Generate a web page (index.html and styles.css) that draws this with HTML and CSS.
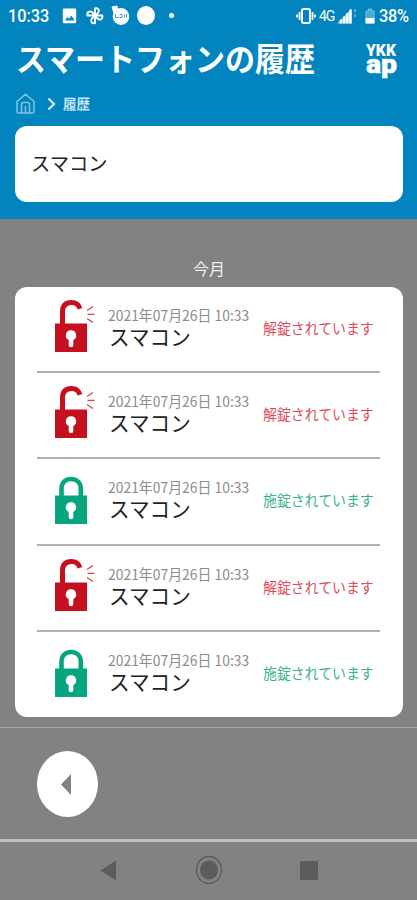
FILE: index.html
```html
<!DOCTYPE html>
<html lang="ja">
<head>
<meta charset="UTF-8">
<title>スマートフォンの履歴</title>
<link rel="stylesheet" href="styles.css">
</head>
<body>
	<svg class="symbols" width="0" height="0">
		<symbol id="unlocked" viewBox="0 0 42 54">
			<path d="M7.500 25V12C7.500 4.500 12 2.600 16.500 2.600C20.500 2.600 23.500 4 25 8.800" fill="none" stroke="#c4101f" stroke-width="5"/>
			<path d="M0 23.500H32V52H0Z" fill="#c4101f"/>
			<path d="M16 30.200a5 5.200 0 0 0-2.300 9.900V45a2.300 2.300 0 0 0 4.600 0V40.100A5 5.200 0 0 0 16 30.200Z" fill="#fff"/>
			<path d="M32 10.500L38 6.500M32.500 14.400H39.500M32 18.500L38 22.500" fill="none" stroke="#d04450" stroke-width="1.400"/>
		</symbol>
		<symbol id="locked" viewBox="0 0 42 54">
			<path d="M6.500 25V17C6.500 10 11 7 16 7S25.800 10 25.800 17V25" fill="none" stroke="#05a67f" stroke-width="4.600"/>
			<path d="M0 23.500H32V52H0Z" fill="#05a67f"/>
			<path d="M16 30.200a5 5.200 0 0 0-2.300 9.900V45a2.300 2.300 0 0 0 4.600 0V40.100A5 5.200 0 0 0 16 30.200Z" fill="#fff"/>
		</symbol>
	</svg>

	<header class="header">
		<div class="statusBar">
			<span class="clock">10:33</span>
			<svg class="notices" width="115" height="24" viewBox="62 4 115 24">
				<path fill="#fff" fill-rule="evenodd" d="M64 8.500H75a1.200 1.200 0 0 1 1.200 1.200V22a1.200 1.200 0 0 1-1.200 1.200H64a1.200 1.200 0 0 1-1.200-1.200V9.700a1.200 1.200 0 0 1 1.200-1.200ZM65 20.500H74.500L71.500 15.500L69 18.700L67.300 17Z"/>
				<g fill="none" stroke="#fff" stroke-width="1.900">
					<path d="M95 15.500V8.500C98.500 7.500 100 10.500 98 13L95 15.500"/>
					<path d="M95 15.500H102.300C103.300 19 100 20.500 97.500 18.500L95 15.500"/>
					<path d="M95 15.500V23C91.500 24 90 21 92 18.500L95 15.500"/>
					<path d="M95 15.500H87.500C86.500 12 90 10.500 92.500 12.500L95 15.500"/>
				</g>
				<ellipse cx="121" cy="16.500" rx="8.300" ry="8.500" fill="#fff"/>
				<path d="M112 7L117 6L118 11L114 13Z" fill="#fff" stroke="#fff"/>
				<path d="M115.500 14V17.500H118.500M119.500 14.500H122V17.500H119.500M124.500 14.500V17.500M126.500 14V17.500" fill="none" stroke="#3c9bc9"/>
				<ellipse cx="146" cy="15.500" rx="9" ry="9.600" fill="#fff"/>
				<circle cx="171.500" cy="15.500" r="2.500" fill="#fff"/>
			</svg>
			<div class="phoneState">
				<svg width="20" height="18" viewBox="0 0 20 18">
					<rect x="6" y="2" width="8" height="14" rx="1.500" fill="none" stroke="#fff" stroke-width="2"/>
					<path d="M3.500 5V13M16.500 5V13M1 7.500V10.500M19 7.500V10.500" stroke="#fff" stroke-width="1.800"/>
				</svg>
				<span class="network">4G</span>
				<svg width="20" height="18" viewBox="0 0 20 18">
					<path d="M0 16.500L14.500 1.500V16.500Z" fill="#9bd0e8"/>
					<path d="M4 16.500V12.500M7.200 16.500V9.500M10.400 16.500V6M13.500 16.500V2.500" stroke="#fff" stroke-width="2.300"/>
					<path d="M18 2V5M18 7V10" stroke="#6bb9dc" stroke-width="1.500"/>
				</svg>
				<svg class="battery" width="10" height="18" viewBox="0 0 10 18">
					<path d="M1 4H3.500V2H6.500V4H9V16H1Z" fill="#4aa9d3" stroke="#7cc2e0"/>
					<path d="M.5 11H9.500V16.500H.5Z" fill="#fff"/>
				</svg>
				<span class="percent">38%</span>
			</div>
		</div>
		<div class="titleRow">
			<h1>スマートフォンの履歴</h1>
			<svg class="logo" width="32" height="34" viewBox="0 0 32 34">
				<text class="logoTop" x="0" y="13" textLength="30" lengthAdjust="spacingAndGlyphs">YKK</text>
				<text class="logoBottom" x="0" y="30" textLength="31" lengthAdjust="spacingAndGlyphs">ap</text>
			</svg>
		</div>
		<nav class="breadcrumb">
			<svg width="19" height="22" viewBox="0 0 19 22">
				<path d="M1 8.500L9.500 1.300L18 8.500V18.500Q18 20 16.500 20H2.500Q1 20 1 18.500ZM5.500 20V11.500Q5.500 9.500 7.500 9.500H11.500Q13.500 9.500 13.500 11.500V20M9.500 13V20" fill="none" stroke="#7ec5e5" stroke-width="1.500"/>
			</svg>
			<svg class="chevron" width="9" height="14" viewBox="0 0 9 14">
				<path d="M1.500 1.500L7 7L1.500 12.500" fill="none" stroke="#d5edf8" stroke-width="2.200"/>
			</svg>
			<span>履歴</span>
		</nav>
		<div class="device"><span>スマコン</span></div>
	</header>

	<main class="history">
		<h2>今月</h2>
		<ul class="historyList">
			<li>
				<svg class="lock" width="42" height="54"><use href="#unlocked"/></svg>
				<div class="entry"><time>2021年07月26日 10:33</time><span class="name">スマコン</span></div>
				<span class="state open">解錠されています</span>
			</li>
			<li>
				<svg class="lock" width="42" height="54"><use href="#unlocked"/></svg>
				<div class="entry"><time>2021年07月26日 10:33</time><span class="name">スマコン</span></div>
				<span class="state open">解錠されています</span>
			</li>
			<li>
				<svg class="lock" width="42" height="54"><use href="#locked"/></svg>
				<div class="entry"><time>2021年07月26日 10:33</time><span class="name">スマコン</span></div>
				<span class="state closed">施錠されています</span>
			</li>
			<li>
				<svg class="lock" width="42" height="54"><use href="#unlocked"/></svg>
				<div class="entry"><time>2021年07月26日 10:33</time><span class="name">スマコン</span></div>
				<span class="state open">解錠されています</span>
			</li>
			<li>
				<svg class="lock" width="42" height="54"><use href="#locked"/></svg>
				<div class="entry"><time>2021年07月26日 10:33</time><span class="name">スマコン</span></div>
				<span class="state closed">施錠されています</span>
			</li>
		</ul>
	</main>

	<footer class="footer">
		<button type="button" class="backButton" aria-label="戻る">
			<svg width="10" height="21" viewBox="0 0 10 21"><path d="M10 0V21L0 10.500Z" fill="#828282"/></svg>
		</button>
	</footer>
	<div class="systemNav">
		<svg width="17" height="21" viewBox="0 0 17 21"><path d="M16 .5V20.500L.5 10.500Z" fill="#5c5c5c"/></svg>
		<svg width="28" height="30" viewBox="0 0 28 30">
			<ellipse cx="14" cy="15" rx="12.500" ry="13.500" fill="none" stroke="#5c5c5c" stroke-width="1.300"/>
			<ellipse cx="14" cy="15" rx="9" ry="9.600" fill="#5c5c5c"/>
		</svg>
		<svg width="18" height="19" viewBox="0 0 18 19"><rect width="18" height="19" rx="1" fill="#5c5c5c"/></svg>
	</div>
</body>
</html>
```
FILE: styles.css
```css
*{
	box-sizing: border-box;
}
body {
	margin: 0;
	width: 417px;
	height: 900px;
	overflow: hidden;
	display: flex;
	flex-direction: column;
	background: #828282;
	font-family: "Noto Sans CJK JP", sans-serif;
}
svg {
	display: block;
	flex: none;
}
.symbols {
	position: absolute;
}
.header {
	height: 219px;
	background: #0284be;
	color: white;
}
.statusBar {
	height: 32px;
	display: flex;
	align-items: center;
	padding: 0 7px 0 8px;
	font-family: Roboto, sans-serif;
}
.clock {
	width: 54px;
	font-size: 16.3px;
	font-weight: 500;
	transform: scaleY(1.07);
}
.phoneState {
	margin-left: auto;
	display: flex;
	align-items: center;
}
.network {
	width: 18px;
	margin-left: 3px;
	font-size: 14px;
	letter-spacing: -1px;
}
.battery {
	margin: 0 4px 0 8px;
}
.percent {
	font-size: 16.3px;
	font-weight: 500;
	width: 31px;
	letter-spacing: -0.3px;
	transform: scaleY(1.07);
}
.titleRow {
	height: 51px;
	padding: 0 19px 0 16px;
	display: flex;
	align-items: center;
	justify-content: space-between;
}
h1 {
	margin: 0;
	font-size: 30px;
	line-height: 51px;
	font-weight: bold;
	white-space: nowrap;
	transform: scaleY(1.06);
}
.logo {
	margin-top: 4px;
	overflow: visible;
	font-family: Roboto, sans-serif;
	font-weight: 900;
	fill: white;
}
.logoTop {
	font-size: 17px;
}
.logoBottom {
	font-size: 26px;
	stroke: white;
	stroke-width: 0.5px;
}
.breadcrumb {
	height: 38px;
	padding: 3px 0 0 16px;
	display: flex;
	align-items: center;
	color: #c5e6f4;
	font-size: 13.5px;
	font-weight: bold;
}
.breadcrumb span {
	margin-top: -2px;
}
.chevron {
	margin: 0 7px 0 12px;
}
.device {
	height: 76px;
	margin: 5px 14px 0 15px;
	padding: 0 0 3px 16px;
	display: flex;
	align-items: center;
	border-radius: 12px;
	background: white;
	color: #222;
	font-size: 19.3px;
}
.history {
	height: 508px;
	padding: 35px 14px 0 15px;
}
h2 {
	margin: 0;
	height: 33px;
	font-size: 16px;
	line-height: 28px;
	font-weight: normal;
	text-align: center;
	color: #f0f0f0;
}
.historyList {
	margin: 0;
	padding: 0 23px 0 22px;
	height: 430px;
	list-style: none;
	border-radius: 12px;
	background: white;
}
.historyList li {
	height: 86.2px;
	padding-left: 18px;
	display: flex;
	border-bottom: 2px solid #b0b0b0;
}
.historyList li:last-child {
	border-bottom: none;
}
.lock {
	margin-top: 13px;
}
.entry {
	margin: 17px 0 0 11px;
	width: 155px;
	white-space: nowrap;
}
time {
	display: block;
	height: 21px;
	line-height: 22px;
	font-size: 13.9px;
	color: #8c8c8c;
	transform: scaleY(1.05);
}
.name {
	display: block;
	padding-left: 1px;
	line-height: 23px;
	font-size: 20.6px;
	color: #222;
	transform: scaleY(1.04);
}
.state {
	margin-top: 32px;
	line-height: 21px;
	font-size: 13.9px;
	white-space: nowrap;
	transform: scaleY(1.05);
}
.open {
	color: #d94c5c;
}
.closed {
	color: #3bb18d;
}
.footer {
	height: 115px;
	padding: 23px 37px;
	border-top: 1px solid #a5a5a5;
	border-bottom: 3px solid #c0c0c0;
}
.backButton {
	width: 61px;
	height: 66px;
	padding: 0 3px 0 0;
	border: none;
	border-radius: 50%;
	background: white;
	display: flex;
	align-items: center;
	justify-content: center;
}
.systemNav {
	height: 58px;
	padding: 0 99px 2px 100px;
	display: flex;
	align-items: center;
	justify-content: space-between;
}
```
